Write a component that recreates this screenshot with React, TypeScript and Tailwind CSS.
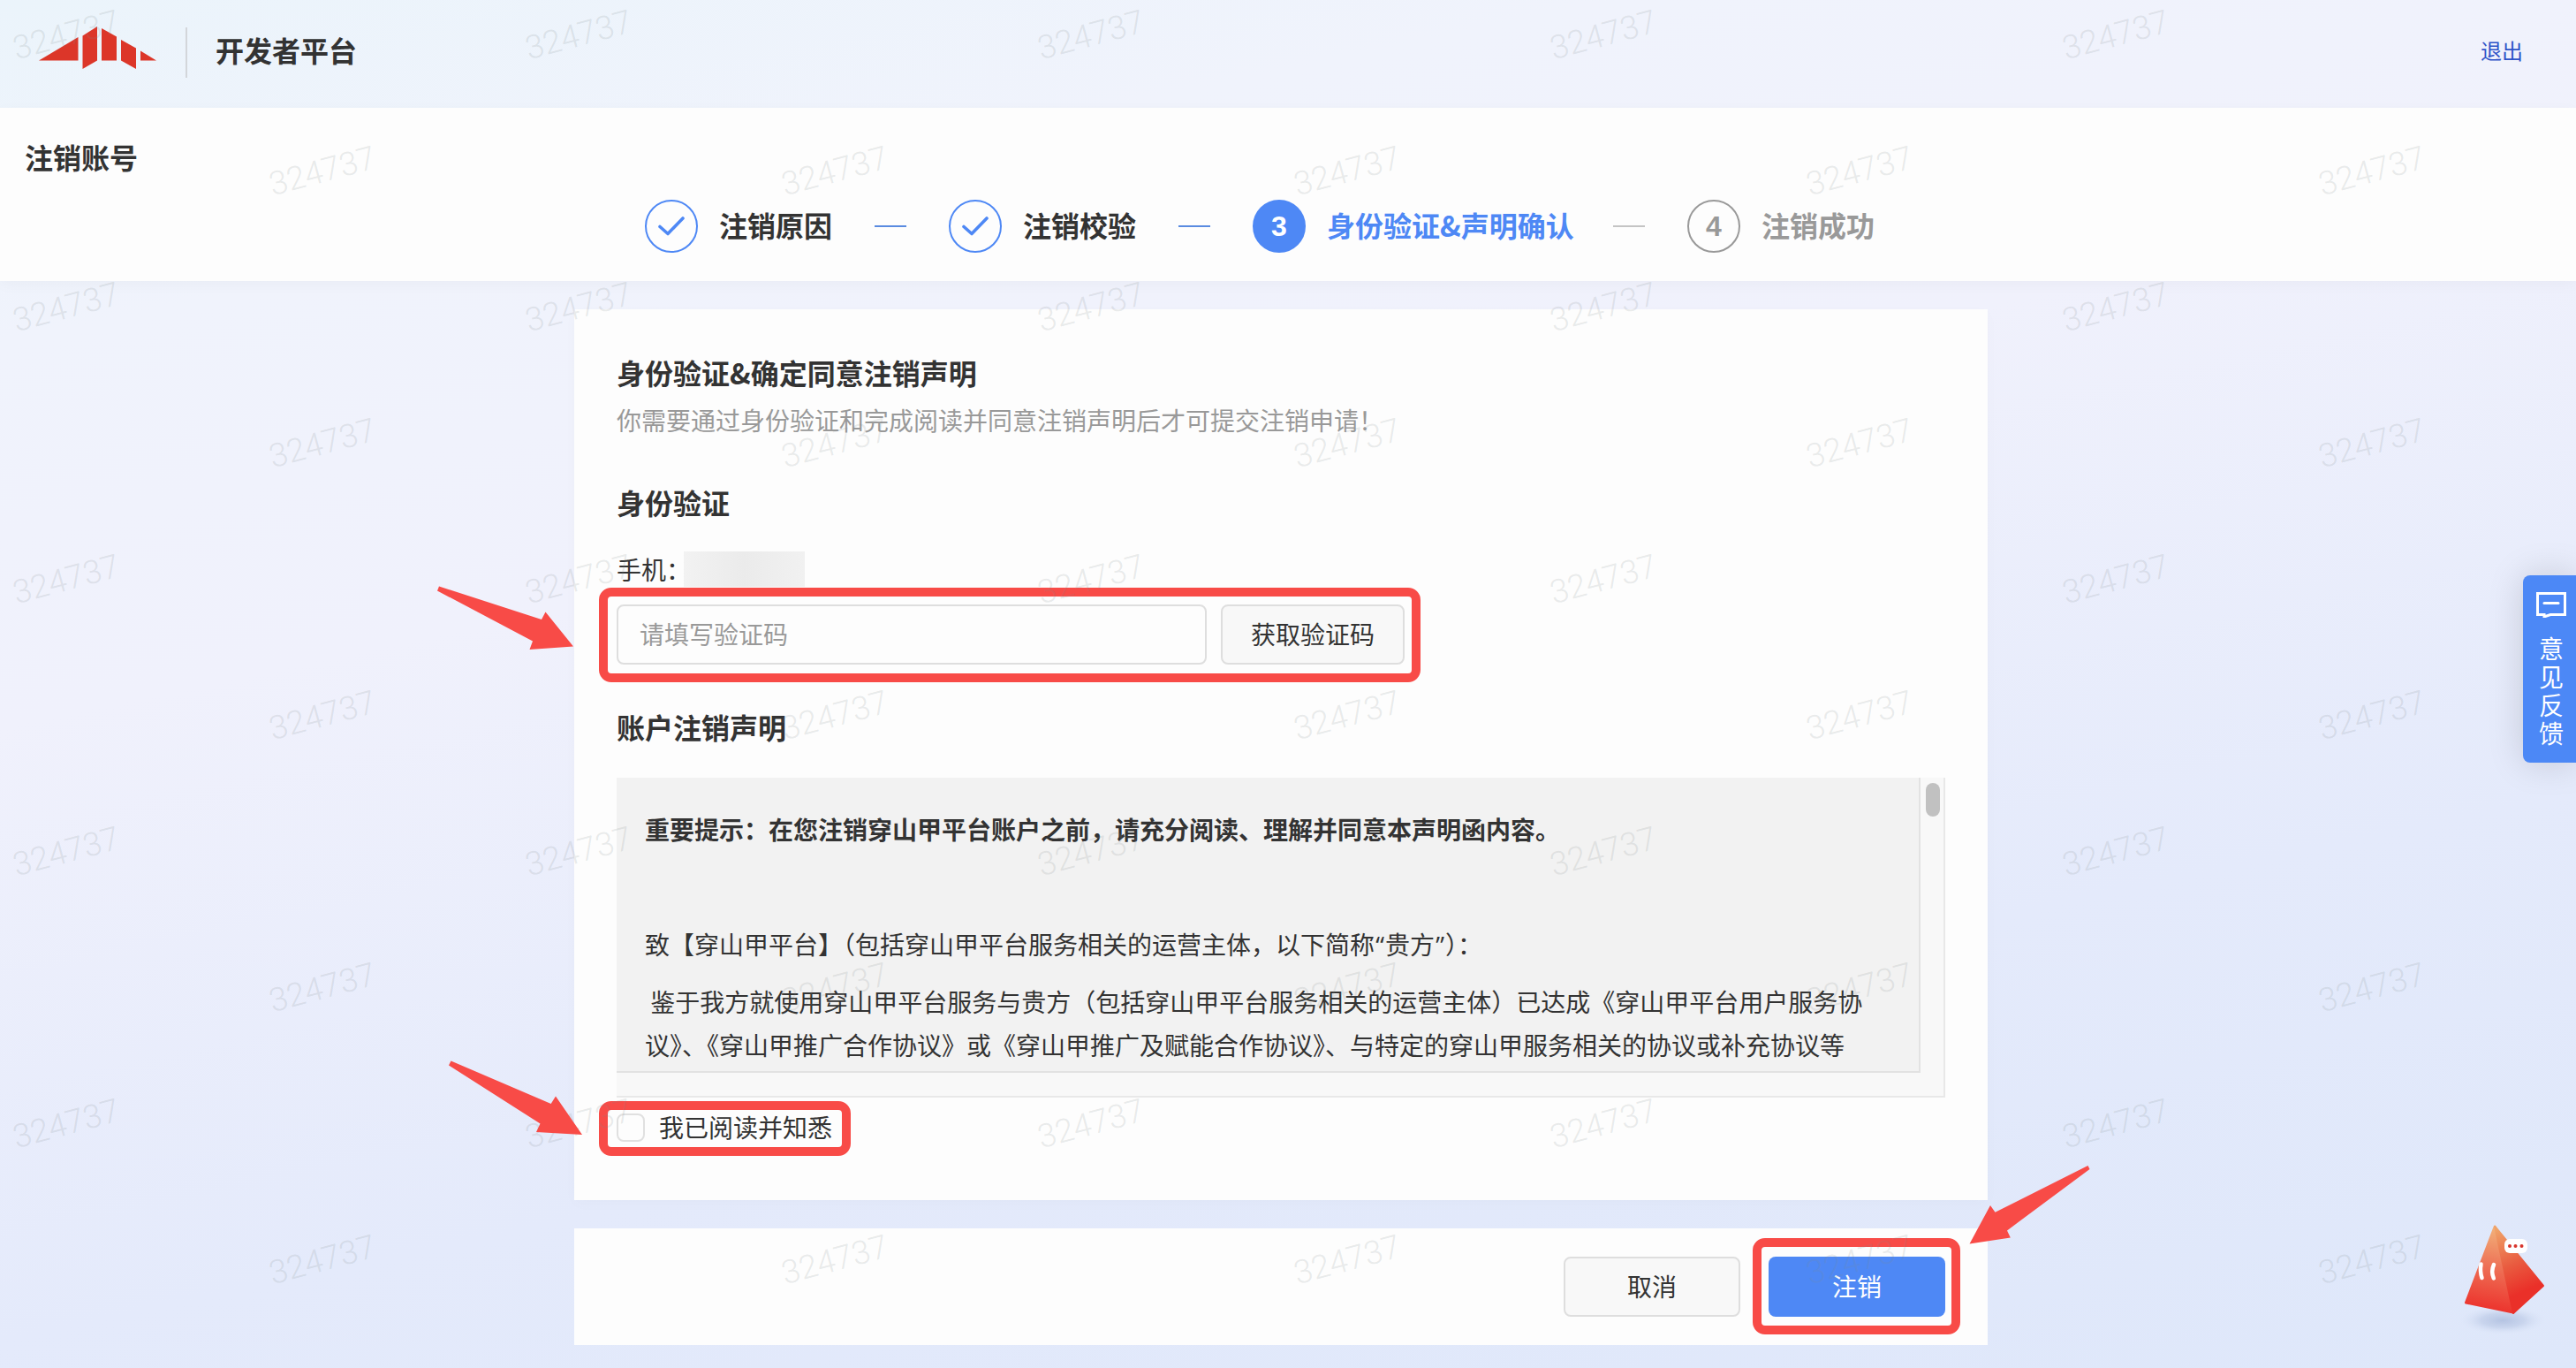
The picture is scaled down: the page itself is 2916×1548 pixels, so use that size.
import { Fragment, useState } from "react";
import clsx from "clsx";

type StepStatus = "done" | "active" | "pending";

interface Step {
  title: string;
  status: StepStatus;
  width: string;
}

const STEPS: Step[] = [
  { title: "注销原因", status: "done", width: "w-32" },
  { title: "注销校验", status: "done", width: "w-32" },
  { title: "身份验证&声明确认", status: "active", width: "w-[276px]" },
  { title: "注销成功", status: "pending", width: "w-32" },
];

const WATERMARK = "324737";

export default function App() {
  const [code, setCode] = useState("");
  const [agreed, setAgreed] = useState(false);

  return (
    <div className="relative flex h-[1548px] w-[2916px] flex-col overflow-hidden bg-[linear-gradient(168deg,#ebf4fb_0%,#f0f3fc_18%,#f0f1fc_38%,#e4eafb_70%,#dee7fa_100%)] font-['Noto_Sans_CJK_SC','Liberation_Sans',sans-serif] text-[#333]">
      <Header />

      <section className="h-[196px] shrink-0 bg-[#fdfdfd] shadow-[0_4px_16px_rgba(0,0,0,0.03)]">
        <h1 className="px-7 pt-[31px] text-[32px] leading-[48px] font-bold">
          注销账号
        </h1>
        <Steps />
      </section>

      <main className="mt-8 ml-[650px] w-[1600px]">
        <div className="h-[1008px] bg-[#fdfdfd] px-12 pt-12 shadow-[0_4px_16px_rgba(0,0,0,0.02)]">
          <h2 className="text-[32px] leading-[46px] font-bold">
            身份验证&amp;确定同意注销声明
          </h2>
          <p className="mt-[9px] text-[28px] leading-[44px] text-[#999]">
            你需要通过身份验证和完成阅读并同意注销声明后才可提交注销申请！
          </p>

          <h3 className="mt-12 text-[32px] leading-[46px] font-bold">
            身份验证
          </h3>
          <div className="mt-[33px] flex h-10 text-[28px] leading-10">
            <span className="w-[76px] whitespace-nowrap">手机：</span>
            <span className="h-10 w-[137px] bg-linear-to-r from-[#f2f2f2] via-[#ebebeb] to-[#f1f1f1]" />
          </div>
          <div className="relative mt-5 flex gap-4">
            <input
              value={code}
              onChange={(e) => setCode(e.target.value)}
              placeholder="请填写验证码"
              className="h-[68px] w-[668px] rounded-lg border-2 border-[#dedede] bg-transparent px-6 pb-0.5 text-[28px] outline-none placeholder:text-[#999]"
            />
            <button className="h-[68px] w-52 rounded-lg border-2 border-[#dedede] bg-[#f8f8f8] pb-0.5 text-[28px]">
              获取验证码
            </button>
            <Highlight className="-top-[19px] -left-5 h-[107px] w-[930px]" />
          </div>

          <h3 className="mt-[47px] text-[32px] leading-[46px] font-bold">
            账户注销声明
          </h3>
          <Statement />

          <label className="relative mt-[18px] flex h-8 items-center gap-4 text-[28px] leading-8">
            <input
              type="checkbox"
              checked={agreed}
              onChange={(e) => setAgreed(e.target.checked)}
              className="size-8 appearance-none rounded-lg border-2 border-[#e0e0e0] bg-transparent"
            />
            <span className="-mt-0.5">我已阅读并知悉</span>
            <Highlight className="-top-[14px] -left-5 h-[62px] w-[285px]" />
          </label>
        </div>

        <div className="mt-8 flex h-[132px] items-center justify-end gap-8 bg-[#fdfdfd] px-12">
          <button className="h-[68px] w-[200px] rounded-lg border-2 border-[#dedede] bg-[#f8f8f8] pb-0.5 text-[28px]">
            取消
          </button>
          <div className="relative">
            <button className="h-[68px] w-[200px] rounded-lg bg-[#4e88f5] pb-0.5 text-[28px] text-white">
              注销
            </button>
            <Highlight className="-top-[21px] -left-[18px] h-[109px] w-[235px]" />
          </div>
        </div>
      </main>

      <Feedback />
      <Mascot />
      <Watermarks />
      <Arrows />
    </div>
  );
}

function Header() {
  return (
    <header className="flex h-[122px] shrink-0 items-center pr-[60px] pl-11">
      <svg width="133" height="48" viewBox="0 0 133 48" fill="#dc3629" className="-mt-[14px]">
        <path d="M0 38.5 44.5 12v26.5z" />
        <path d="M49.5 10.5 66 0v38.5L49.5 48z" />
        <path d="M71 2l17 9.5v27H71z" />
        <path d="M93 15l17 9.5V48l-17-9.5z" />
        <path d="M115 27.5l18 11h-18z" />
      </svg>
      <span className="-mt-1 ml-[33px] h-[57px] w-0.5 bg-[#d3d6da]" />
      <span className="-mt-[10px] ml-8 text-[32px] leading-[48px] font-bold">
        开发者平台
      </span>
      <a className="-mt-2 ml-auto text-2xl text-[#2f54c8]">退出</a>
    </header>
  );
}

function Steps() {
  return (
    <ol className="mt-[25px] ml-[730px] flex h-[60px] items-center">
      {STEPS.map((step, i) => (
        <Fragment key={step.title}>
          {i > 0 && (
            <li
              className={clsx(
                "mx-12 h-0.5 w-9",
                step.status === "pending" ? "bg-[#c4c4c4]" : "bg-[#5a8be0]"
              )}
            />
          )}
          <li className="flex items-center gap-6">
            <StepIcon index={i + 1} status={step.status} />
            <span
              className={clsx(
                "-mt-1 text-[32px] leading-[48px] font-bold whitespace-nowrap",
                step.width,
                step.status === "active" && "text-[#4e88f5]",
                step.status === "pending" && "text-[#999]"
              )}
            >
              {step.title}
            </span>
          </li>
        </Fragment>
      ))}
    </ol>
  );
}

function StepIcon({ index, status }: { index: number; status: StepStatus }) {
  return (
    <span
      className={clsx(
        "flex size-[60px] items-center justify-center rounded-full border-2 font-['Liberation_Sans',sans-serif] text-[32px] font-bold",
        status === "done" && "border-[#4e88f5]",
        status === "active" && "border-[#4e88f5] bg-[#4e88f5] text-white",
        status === "pending" && "border-[#999] text-[#999]"
      )}
    >
      {status === "done" ? (
        <svg width="30" height="22" viewBox="0 0 30 22" fill="none" stroke="#4e88f5" strokeWidth="3.6" strokeLinecap="round" strokeLinejoin="round">
          <path d="M2 11.5 11 19.5 28 2" />
        </svg>
      ) : (
        index
      )}
    </span>
  );
}

function Statement() {
  return (
    <div className="mt-[35px] flex h-[362px] w-[1504px] border-r-2 border-b-2 border-[#e8e8e8] bg-[#f8f8f8]">
      <div className="h-[334px] w-[1476px] space-y-4 overflow-hidden border-r-2 border-b-2 border-[#e2e2e2] bg-[#f2f2f2] pt-[34px] pr-14 pl-8 text-[28px] leading-[49px]">
        <p className="font-bold">
          重要提示：在您注销穿山甲平台账户之前，请充分阅读、理解并同意本声明函内容。
        </p>
        <p>&nbsp;</p>
        <p>
          致【穿山甲平台】（包括穿山甲平台服务相关的运营主体，以下简称
          <Quote>“</Quote>贵方<Quote>”</Quote>）：
        </p>
        <p className="whitespace-nowrap">
          &nbsp;鉴于我方就使用穿山甲平台服务与贵方（包括穿山甲平台服务相关的运营主体）已达成《穿山甲平台用户服务协
          <br />
          议》、《穿山甲推广合作协议》或《穿山甲推广及赋能合作协议》、与特定的穿山甲服务相关的协议或补充协议等
        </p>
      </div>
      <div className="mt-1.5 ml-1.5 h-[38px] w-4 rounded-full bg-[#c1c1c1]" />
    </div>
  );
}

function Quote({ children }: { children: string }) {
  return (
    <span className="inline-block w-3 text-center font-['Open_Sans',sans-serif] leading-none">
      {children}
    </span>
  );
}

function Highlight({ className }: { className: string }) {
  return (
    <span
      className={clsx(
        "pointer-events-none absolute rounded-[14px] border-10 border-[#f84b47]",
        className
      )}
    />
  );
}

function Feedback() {
  return (
    <button className="absolute top-[651px] right-0 flex h-[212px] w-[60px] flex-col items-center rounded-l-lg bg-[#4c88f6] pt-[18px] pl-1 text-[28px] leading-8 text-white shadow-[0_0_40px_rgba(0,0,0,0.15)]">
      <svg width="34" height="30" viewBox="0 0 34 30" fill="none" stroke="#fff" strokeWidth="3">
        <path d="M1.5 2.5h31v24H16L9 29v-2.5H1.5z" />
        <path d="M9 13.5h16" strokeLinecap="round" />
      </svg>
      <span className="mt-[18px] w-7">意见反馈</span>
    </button>
  );
}

function Mascot() {
  return (
    <svg className="absolute top-[1370px] left-[2770px]" width="130" height="160" viewBox="0 0 130 160">
      <defs>
        <linearGradient id="front" x1="0.6" y1="0" x2="0.5" y2="1">
          <stop offset="0" stopColor="#f2b27a" />
          <stop offset="0.45" stopColor="#ee7357" />
          <stop offset="1" stopColor="#ec302b" />
        </linearGradient>
        <linearGradient id="side" x1="0.2" y1="0" x2="0.45" y2="1">
          <stop offset="0" stopColor="#f0a268" />
          <stop offset="0.45" stopColor="#e95c40" />
          <stop offset="0.8" stopColor="#ea3029" />
        </linearGradient>
        <radialGradient id="shade">
          <stop offset="0" stopColor="#b4c3e2" />
          <stop offset="0.5" stopColor="#c3d0ea" stopOpacity="0.8" />
          <stop offset="1" stopColor="#d8e2f6" stopOpacity="0" />
        </radialGradient>
      </defs>
      <ellipse cx="63" cy="124" rx="48" ry="16" fill="url(#shade)" />
      <path d="M54 18.5 21.5 104 75 115z" fill="url(#front)" stroke="url(#front)" strokeWidth="3" strokeLinejoin="round" />
      <path d="M54 17.5 75 116 109 85z" fill="url(#side)" stroke="url(#side)" strokeWidth="2" strokeLinejoin="round" />
      <path d="M38.5 60.5q-1.500 8 1 15.500M53 61q-3.500 7.500-.2 15.500" fill="none" stroke="#fff" strokeWidth="4.5" strokeLinecap="round" />
      <rect x="65" y="32" width="26" height="16" rx="6" fill="#fff" />
      <g fill="#d8352c">
        <circle cx="71" cy="40" r="2" />
        <circle cx="77.5" cy="40" r="2" />
        <circle cx="84.5" cy="40" r="2" />
      </g>
    </svg>
  );
}

// Two interleaved grids of the user id, repeated every 580 x 308.
function Watermarks() {
  return (
    <div className="pointer-events-none absolute inset-0 overflow-hidden">
      {Array.from({ length: 10 }, (_, row) =>
        Array.from({ length: 5 }, (_, col) => (
          <span
            key={`${row}-${col}`}
            className="absolute -mt-5 -ml-[62px] w-[124px] rotate-[-15deg] text-center font-[Roboto,sans-serif] text-[37px] leading-10 font-light text-[#7f8a8a]/18"
            style={{
              left: 75 + col * 580 + (row % 2) * 290,
              top: 40 + row * 154,
            }}
          >
            {WATERMARK}
          </span>
        ))
      )}
    </div>
  );
}

function Arrows() {
  return (
    <svg className="pointer-events-none absolute inset-0" width="2916" height="1548" fill="#f84b47">
      <path d="M497 663.5 613 701l4.5-8.5L649 731.5 599.5 735l3.5-9.5L495 668.5z" />
      <path d="M510.5 1200.5 623.7 1249l5.3-8.5 30 43.5-52-3 4.5-9.5L508 1205.5z" />
      <path d="M2363.5 1319 2258.5 1371.7 2253 1364 2229.5 1407.5 2275.8 1400.5 2272 1392.5 2365.5 1323z" />
    </svg>
  );
}
